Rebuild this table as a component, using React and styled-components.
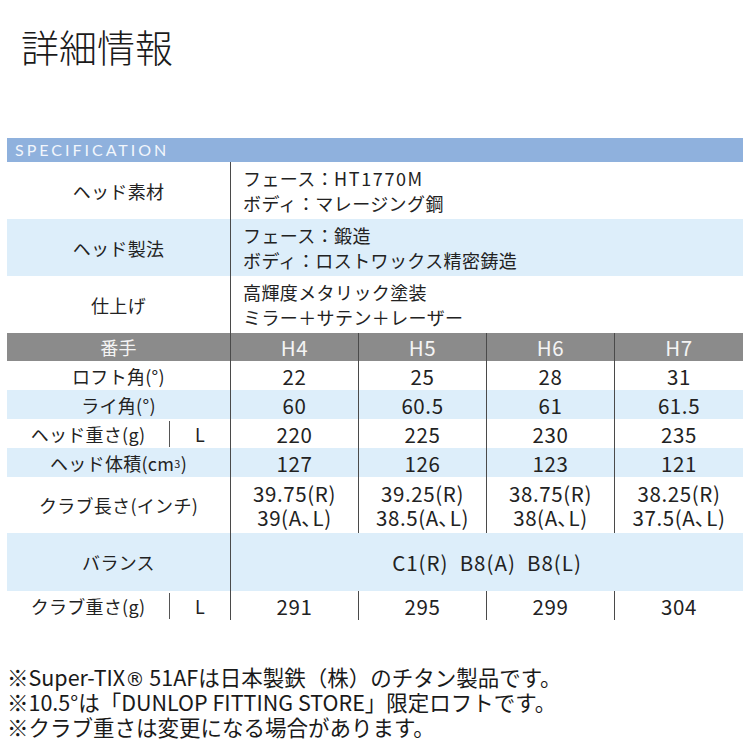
import React from 'react'
import styled, { createGlobalStyle } from 'styled-components'

const GlobalStyle = createGlobalStyle`
  body {
    margin: 0;
    background: #fff;
    font-family: 'Noto Sans CJK JP', 'Noto Sans', sans-serif;
    color: #222;
  }
`

const Page = styled.div`
  width: 750px;
  height: 750px;
  overflow: hidden;
`

const Title = styled.h1`
  margin: 0;
  padding: 27px 0 0 21px;
  height: 138px;
  box-sizing: border-box;
  font-size: 38px;
  line-height: 38px;
  font-weight: 300;
  color: #1a1a1a;
`

const Table = styled.div`
  margin-left: 7px;
  width: 736px;
`

const SpecBar = styled.div`
  height: 24px;
  background: #8fb1dd;
  color: #f2f6fc;
  font-family: Lato, 'Open Sans', sans-serif;
  font-size: 16px;
  letter-spacing: 3px;
  line-height: 24px;
  padding-left: 8px;
`

const Row = styled.div`
  display: grid;
  grid-template-columns: 223px 128px 128px 128px 129px;
  height: ${p => p.$h}px;
  background: ${p => (p.$tone === 'blue' ? '#ddeefa' : p.$tone === 'gray' ? '#8b8b8b' : '#fff')};
  color: ${p => (p.$tone === 'gray' ? '#f4f4f4' : '#222')};
`

const Label = styled.div`
  display: flex;
  align-items: center;
  justify-content: center;
  font-size: 18px;
  letter-spacing: 0.3px;
  white-space: nowrap;
`

const SplitLabel = styled.div`
  display: grid;
  grid-template-columns: 162px 61px;
  align-items: center;
  font-size: 18px;
  letter-spacing: 0.3px;
  white-space: nowrap;
`

const SplitPart = styled.div`
  text-align: center;
  ${p => p.$rule && `
    border-left: 1px solid #555;
    height: 26px;
    line-height: 26px;
  `}
`

const Cell = styled.div`
  display: flex;
  flex-direction: column;
  align-items: center;
  justify-content: center;
  border-left: 1px solid #4a4a4a;
  font-size: 20.5px;
  letter-spacing: 0.6px;
  line-height: 24px;
  white-space: nowrap;
`

const Wide = styled.div`
  grid-column: 2 / span 4;
  display: flex;
  flex-direction: column;
  justify-content: center;
  align-items: ${p => (p.$center ? 'center' : 'flex-start')};
  padding-left: ${p => (p.$center ? 0 : 12)}px;
  border-left: 1px solid #4a4a4a;
  font-size: ${p => (p.$center ? 20.5 : 18)}px;
  letter-spacing: ${p => (p.$center ? 1 : 0.4)}px;
  line-height: 25px;
  white-space: nowrap;
`

const Latin = styled.span`
  letter-spacing: 1.6px;
`

const Notes = styled.div`
  margin-top: 44px;
  padding-left: 7px;
  font-size: 21.5px;
  line-height: 25px;
  color: #1a1a1a;
  white-space: nowrap;
`

const Reg = styled.span`
  font-family: 'DejaVu Sans', sans-serif;
  font-size: 0.9em;
  line-height: 0;
`

const materials = [
  { label: 'ヘッド素材', lines: [<>フェース：<Latin>HT1770M</Latin></>, 'ボディ：マレージング鋼'], tone: 'white' },
  { label: 'ヘッド製法', lines: ['フェース：鍛造', 'ボディ：ロストワックス精密鋳造'], tone: 'blue' },
  { label: '仕上げ', lines: ['高輝度メタリック塗装', 'ミラー＋サテン＋レーザー'], tone: 'white' }
]

const specs = [
  { label: 'ロフト角(°)', values: ['22', '25', '28', '31'], tone: 'white', h: 29 },
  { label: 'ライ角(°)', values: ['60', '60.5', '61', '61.5'], tone: 'blue', h: 29 },
  { label: 'ヘッド重さ(g)', sub: 'L', values: ['220', '225', '230', '235'], tone: 'white', h: 29 },
  { label: <>ヘッド体積(cm<sup style={{ fontSize: '0.6em' }}>3</sup>)</>, values: ['127', '126', '123', '121'], tone: 'blue', h: 29 },
  {
    label: 'クラブ長さ(インチ)',
    values: [
      ['39.75(R)', '39(A､L)'],
      ['39.25(R)', '38.5(A､L)'],
      ['38.75(R)', '38(A､L)'],
      ['38.25(R)', '37.5(A､L)']
    ],
    tone: 'white',
    h: 56
  }
]

function SpecRow ({ row }) {
  return (
    <Row $h={row.h} $tone={row.tone}>
      {row.sub
        ? (
          <SplitLabel>
            <SplitPart>{row.label}</SplitPart>
            <SplitPart $rule>{row.sub}</SplitPart>
          </SplitLabel>
          )
        : <Label>{row.label}</Label>}
      {row.values.map((v, i) => (
        <Cell key={i}>
          {Array.isArray(v) ? v.map(line => <span key={line}>{line}</span>) : v}
        </Cell>
      ))}
    </Row>
  )
}

export default function App () {
  return (
    <Page>
      <GlobalStyle />
      <Title>詳細情報</Title>
      <Table>
        <SpecBar>SPECIFICATION</SpecBar>
        {materials.map(m => (
          <Row key={m.label} $h={57} $tone={m.tone}>
            <Label>{m.label}</Label>
            <Wide>
              {m.lines.map((line, i) => <span key={i}>{line}</span>)}
            </Wide>
          </Row>
        ))}
        <Row $h={28} $tone='gray'>
          <Label>番手</Label>
          {['H4', 'H5', 'H6', 'H7'].map(h => <Cell key={h}>{h}</Cell>)}
        </Row>
        {specs.map((row, i) => <SpecRow key={i} row={row} />)}
        <Row $h={58} $tone='blue'>
          <Label>バランス</Label>
          <Wide $center>C1(R)&nbsp;&nbsp;B8(A)&nbsp;&nbsp;B8(L)</Wide>
        </Row>
        <SpecRow row={{ label: 'クラブ重さ(g)', sub: 'L', values: ['291', '295', '299', '304'], tone: 'white', h: 29 }} />
      </Table>
      <Notes>
        <div>※Super-TIX<Reg>®</Reg> 51AFは日本製鉄（株）のチタン製品です。</div>
        <div>※10.5°は「DUNLOP FITTING STORE」限定ロフトです。</div>
        <div>※クラブ重さは変更になる場合があります。</div>
      </Notes>
    </Page>
  )
}
